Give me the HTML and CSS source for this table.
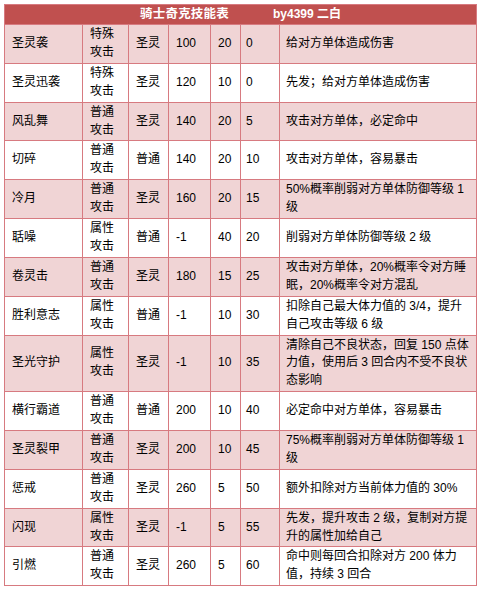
FILE: index.html
```html
<!DOCTYPE html>
<html lang="zh-CN">
<head>
<meta charset="utf-8">
<title>骑士奇克技能表</title>
<link rel="stylesheet" href="styles.css">
</head>
<body>
<table class="skills">
  <colgroup>
    <col class="c-name"><col class="c-type"><col class="c-attr"><col class="c-pow"><col class="c-pp"><col class="c-lv"><col class="c-desc">
  </colgroup>
  <thead>
    <tr><th colspan="7" class="title"><span class="t-main">骑士奇克技能表</span><span class="t-by">by4399 二白</span></th></tr>
  </thead>
  <tbody>
    <tr class="pink"><td>圣灵袭</td><td>特殊<br>攻击</td><td>圣灵</td><td>100</td><td>20</td><td>0</td><td>给对方单体造成伤害</td></tr>
    <tr><td>圣灵迅袭</td><td>特殊<br>攻击</td><td>圣灵</td><td>120</td><td>10</td><td>0</td><td>先发；给对方单体造成伤害</td></tr>
    <tr class="pink"><td>风乱舞</td><td>普通<br>攻击</td><td>圣灵</td><td>140</td><td>20</td><td>5</td><td>攻击对方单体，必定命中</td></tr>
    <tr><td>切碎</td><td>普通<br>攻击</td><td>普通</td><td>140</td><td>20</td><td>10</td><td>攻击对方单体，容易暴击</td></tr>
    <tr class="pink"><td>冷月</td><td>普通<br>攻击</td><td>圣灵</td><td>160</td><td>20</td><td>15</td><td>50%概率削弱对方单体防御等级 1<br>级</td></tr>
    <tr><td>聒噪</td><td>属性<br>攻击</td><td>普通</td><td>-1</td><td>40</td><td>20</td><td>削弱对方单体防御等级 2 级</td></tr>
    <tr class="pink"><td>卷灵击</td><td>普通<br>攻击</td><td>圣灵</td><td>180</td><td>15</td><td>25</td><td>攻击对方单体，20%概率令对方睡<br>眠，20%概率令对方混乱</td></tr>
    <tr><td>胜利意志</td><td>属性<br>攻击</td><td>普通</td><td>-1</td><td>10</td><td>30</td><td>扣除自己最大体力值的 3/4，提升<br>自己攻击等级 6 级</td></tr>
    <tr class="pink"><td>圣光守护</td><td>属性<br>攻击</td><td>圣灵</td><td>-1</td><td>10</td><td>35</td><td>清除自己不良状态，回复 150 点体<br>力值，使用后 3 回合内不受不良状<br>态影响</td></tr>
    <tr><td>横行霸道</td><td>普通<br>攻击</td><td>普通</td><td>200</td><td>10</td><td>40</td><td>必定命中对方单体，容易暴击</td></tr>
    <tr class="pink"><td>圣灵裂甲</td><td>普通<br>攻击</td><td>圣灵</td><td>200</td><td>10</td><td>45</td><td>75%概率削弱对方单体防御等级 1<br>级</td></tr>
    <tr><td>惩戒</td><td>普通<br>攻击</td><td>圣灵</td><td>260</td><td>5</td><td>50</td><td>额外扣除对方当前体力值的 30%</td></tr>
    <tr class="pink"><td>闪现</td><td>属性<br>攻击</td><td>圣灵</td><td>-1</td><td>5</td><td>55</td><td>先发，提升攻击 2 级，复制对方提<br>升的属性加给自己</td></tr>
    <tr><td>引燃</td><td>普通<br>攻击</td><td>圣灵</td><td>260</td><td>5</td><td>60</td><td>命中则每回合扣除对方 200 体力<br>值，持续 3 回合</td></tr>
  </tbody>
</table>
</body>
</html>
```

FILE: styles.css
```css
html, body {
  margin: 0;
  padding: 0;
  background: #ffffff;
}

body {
  padding: 4px;
  font-family: "Liberation Sans", "Noto Sans CJK SC", sans-serif;
  font-size: 12px;
  color: #000000;
}

.skills {
  width: 472px;
  table-layout: fixed;
  border-collapse: collapse;
  border: 1px solid #d77a80;
}

.c-name { width: 78px; }
.c-type { width: 46px; }
.c-attr { width: 40px; }
.c-pow  { width: 42px; }
.c-pp   { width: 30px; }
.c-lv   { width: 39px; }
.c-desc { width: 197px; }

.skills th,
.skills td {
  border: 1px solid #d77a80;
  text-align: left;
  vertical-align: middle;
  white-space: nowrap;
  overflow: visible;
}

.skills td {
  padding: 1px 0 1px 7px;
  line-height: 17.9px;
}

.skills td:nth-child(6) {
  padding-left: 5px;
}

.skills td:nth-child(7) {
  padding-left: 6px;
}

.skills .title {
  background: #c0504f;
  color: #ffffff;
  font-weight: bold;
  text-align: center;
  padding: 0;
  height: 19px;
  line-height: 19px;
  font-size: 12.5px;
}

.t-main {
  letter-spacing: 0.2px;
}

.t-by {
  margin-left: 44px;
  font-size: 12px;
}

.pink td {
  background: #f0d4d5;
}
```
